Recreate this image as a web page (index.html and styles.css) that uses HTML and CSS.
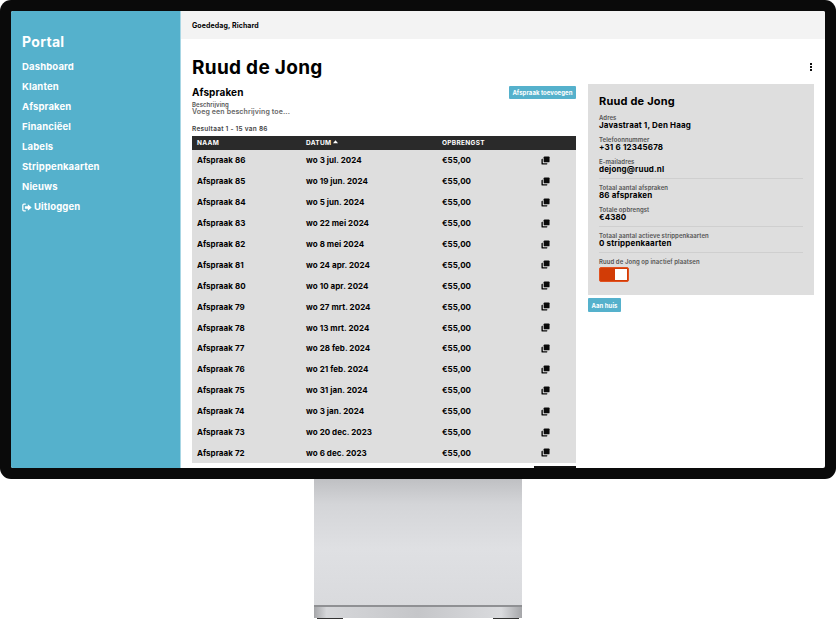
FILE: index.html
```html
<!DOCTYPE html>
<html lang="nl">
<head>
<meta charset="utf-8">
<title>Portal</title>
<link rel="stylesheet" href="styles.css">
</head>
<body>
<div class="monitor">
  <div class="screen">
    <aside class="sidebar">
      <div class="brand">Portal</div>
      <nav class="nav">
        <a>Dashboard</a><a>Klanten</a><a>Afspraken</a><a>Financiëel</a><a>Labels</a><a>Strippenkaarten</a><a>Nieuws</a>
        <a class="logout"><svg class="logout-icon" viewBox="0 0 12 10"><path d="M4.500 1H2.200C1.500 1 1 1.500 1 2.200v5.600C1 8.500 1.500 9 2.200 9h2.300" fill="none" stroke="#fff" stroke-width="1.500"/><path d="M3.500 3.600h3.500V1.200L11.600 5 7 8.800V6.400H3.500z" fill="#fff"/></svg>Uitloggen</a>
      </nav>
    </aside>
    <main class="main">
      <header class="topbar">Goededag, Richard</header>
      <div class="content">
        <div class="title-row">
          <h1>Ruud de Jong</h1>
          <span class="kebab"><i></i><i></i><i></i></span>
        </div>
        <div class="columns">
          <section class="left">
            <div class="section-head">
              <h2>Afspraken</h2>
              <button class="btn">Afspraak toevoegen</button>
            </div>
            <div class="small-label">Beschrijving</div>
            <div class="placeholder">Voeg een beschrijving toe...</div>
            <div class="result">Resultaat 1 - 15 van 86</div>
            <div class="table">
              <div class="row head"><span>NAAM</span><span>DATUM <svg class="sort" viewBox="0 0 6 4"><path d="M3 0l3 3.500H0z" fill="#fff"/></svg></span><span>OPBRENGST</span><span></span></div>
              <div class="row"><span>Afspraak 86</span><span>wo 3 jul. 2024</span><span>€55,00</span><span class="act"><svg class="copy" viewBox="0 0 10 10"><rect x="3" y="0.500" width="6.500" height="6.500" rx="1"/><path d="M2 3v4.500c0 .300.200.500.500.500H7v.500c0 .600-.400 1-1 1H1.500c-.600 0-1-.400-1-1V4c0-.600.400-1 1-1z"/></svg></span></div>
              <div class="row"><span>Afspraak 85</span><span>wo 19 jun. 2024</span><span>€55,00</span><span class="act"><svg class="copy" viewBox="0 0 10 10"><rect x="3" y="0.500" width="6.500" height="6.500" rx="1"/><path d="M2 3v4.500c0 .300.200.500.500.500H7v.500c0 .600-.400 1-1 1H1.500c-.600 0-1-.400-1-1V4c0-.600.400-1 1-1z"/></svg></span></div>
              <div class="row"><span>Afspraak 84</span><span>wo 5 jun. 2024</span><span>€55,00</span><span class="act"><svg class="copy" viewBox="0 0 10 10"><rect x="3" y="0.500" width="6.500" height="6.500" rx="1"/><path d="M2 3v4.500c0 .300.200.500.500.500H7v.500c0 .600-.400 1-1 1H1.500c-.600 0-1-.400-1-1V4c0-.600.400-1 1-1z"/></svg></span></div>
              <div class="row"><span>Afspraak 83</span><span>wo 22 mei 2024</span><span>€55,00</span><span class="act"><svg class="copy" viewBox="0 0 10 10"><rect x="3" y="0.500" width="6.500" height="6.500" rx="1"/><path d="M2 3v4.500c0 .300.200.500.500.500H7v.500c0 .600-.400 1-1 1H1.500c-.600 0-1-.400-1-1V4c0-.600.400-1 1-1z"/></svg></span></div>
              <div class="row"><span>Afspraak 82</span><span>wo 8 mei 2024</span><span>€55,00</span><span class="act"><svg class="copy" viewBox="0 0 10 10"><rect x="3" y="0.500" width="6.500" height="6.500" rx="1"/><path d="M2 3v4.500c0 .300.200.500.500.500H7v.500c0 .600-.400 1-1 1H1.500c-.600 0-1-.400-1-1V4c0-.600.400-1 1-1z"/></svg></span></div>
              <div class="row"><span>Afspraak 81</span><span>wo 24 apr. 2024</span><span>€55,00</span><span class="act"><svg class="copy" viewBox="0 0 10 10"><rect x="3" y="0.500" width="6.500" height="6.500" rx="1"/><path d="M2 3v4.500c0 .300.200.500.500.500H7v.500c0 .600-.400 1-1 1H1.500c-.600 0-1-.400-1-1V4c0-.600.400-1 1-1z"/></svg></span></div>
              <div class="row"><span>Afspraak 80</span><span>wo 10 apr. 2024</span><span>€55,00</span><span class="act"><svg class="copy" viewBox="0 0 10 10"><rect x="3" y="0.500" width="6.500" height="6.500" rx="1"/><path d="M2 3v4.500c0 .300.200.500.500.500H7v.500c0 .600-.400 1-1 1H1.500c-.600 0-1-.400-1-1V4c0-.600.400-1 1-1z"/></svg></span></div>
              <div class="row"><span>Afspraak 79</span><span>wo 27 mrt. 2024</span><span>€55,00</span><span class="act"><svg class="copy" viewBox="0 0 10 10"><rect x="3" y="0.500" width="6.500" height="6.500" rx="1"/><path d="M2 3v4.500c0 .300.200.500.500.500H7v.500c0 .600-.400 1-1 1H1.500c-.600 0-1-.400-1-1V4c0-.600.400-1 1-1z"/></svg></span></div>
              <div class="row"><span>Afspraak 78</span><span>wo 13 mrt. 2024</span><span>€55,00</span><span class="act"><svg class="copy" viewBox="0 0 10 10"><rect x="3" y="0.500" width="6.500" height="6.500" rx="1"/><path d="M2 3v4.500c0 .300.200.500.500.500H7v.500c0 .600-.400 1-1 1H1.500c-.600 0-1-.400-1-1V4c0-.600.400-1 1-1z"/></svg></span></div>
              <div class="row"><span>Afspraak 77</span><span>wo 28 feb. 2024</span><span>€55,00</span><span class="act"><svg class="copy" viewBox="0 0 10 10"><rect x="3" y="0.500" width="6.500" height="6.500" rx="1"/><path d="M2 3v4.500c0 .300.200.500.500.500H7v.500c0 .600-.400 1-1 1H1.500c-.600 0-1-.400-1-1V4c0-.600.400-1 1-1z"/></svg></span></div>
              <div class="row"><span>Afspraak 76</span><span>wo 21 feb. 2024</span><span>€55,00</span><span class="act"><svg class="copy" viewBox="0 0 10 10"><rect x="3" y="0.500" width="6.500" height="6.500" rx="1"/><path d="M2 3v4.500c0 .300.200.500.500.500H7v.500c0 .600-.400 1-1 1H1.500c-.600 0-1-.400-1-1V4c0-.600.400-1 1-1z"/></svg></span></div>
              <div class="row"><span>Afspraak 75</span><span>wo 31 jan. 2024</span><span>€55,00</span><span class="act"><svg class="copy" viewBox="0 0 10 10"><rect x="3" y="0.500" width="6.500" height="6.500" rx="1"/><path d="M2 3v4.500c0 .300.200.500.500.500H7v.500c0 .600-.400 1-1 1H1.500c-.600 0-1-.400-1-1V4c0-.600.400-1 1-1z"/></svg></span></div>
              <div class="row"><span>Afspraak 74</span><span>wo 3 jan. 2024</span><span>€55,00</span><span class="act"><svg class="copy" viewBox="0 0 10 10"><rect x="3" y="0.500" width="6.500" height="6.500" rx="1"/><path d="M2 3v4.500c0 .300.200.500.500.500H7v.500c0 .600-.400 1-1 1H1.500c-.600 0-1-.400-1-1V4c0-.600.400-1 1-1z"/></svg></span></div>
              <div class="row"><span>Afspraak 73</span><span>wo 20 dec. 2023</span><span>€55,00</span><span class="act"><svg class="copy" viewBox="0 0 10 10"><rect x="3" y="0.500" width="6.500" height="6.500" rx="1"/><path d="M2 3v4.500c0 .300.200.500.500.500H7v.500c0 .600-.400 1-1 1H1.500c-.600 0-1-.400-1-1V4c0-.600.400-1 1-1z"/></svg></span></div>
              <div class="row"><span>Afspraak 72</span><span>wo 6 dec. 2023</span><span>€55,00</span><span class="act"><svg class="copy" viewBox="0 0 10 10"><rect x="3" y="0.500" width="6.500" height="6.500" rx="1"/><path d="M2 3v4.500c0 .300.200.500.500.500H7v.500c0 .600-.400 1-1 1H1.500c-.600 0-1-.400-1-1V4c0-.600.400-1 1-1z"/></svg></span></div>
            </div>
            <div class="pager"></div>
          </section>
          <section class="right">
            <div class="card">
              <h3>Ruud de Jong</h3>
              <div class="field"><div class="small-label">Adres</div><div class="value">Javastraat 1, Den Haag</div></div>
              <div class="field"><div class="small-label">Telefoonnummer</div><div class="value">+31 6 12345678</div></div>
              <div class="field"><div class="small-label">E-mailadres</div><div class="value">dejong@ruud.nl</div></div>
              <hr>
              <div class="field"><div class="small-label">Totaal aantal afspraken</div><div class="value">86 afspraken</div></div>
              <div class="field"><div class="small-label">Totale opbrengst</div><div class="value">€4380</div></div>
              <hr>
              <div class="field"><div class="small-label">Totaal aantal actieve strippenkaarten</div><div class="value">0 strippenkaarten</div></div>
              <hr>
              <div class="small-label">Ruud de Jong op inactief plaatsen</div>
              <div class="toggle"><i></i></div>
            </div>
            <button class="btn home">Aan huis</button>
          </section>
        </div>
      </div>
    </main>
  </div>
</div>
<div class="stand"><div class="stand-base"></div><div class="feet"><i></i><i></i></div></div>
</body>
</html>
```
FILE: styles.css
```css
* { box-sizing: border-box; }
html, body { margin: 0; padding: 0; }
body { width: 836px; height: 619px; overflow: hidden; background: #fff; font-family: Inter, "Liberation Sans", sans-serif; color: #000; }
.monitor { height: 479px; background: #0a0a0a; border-radius: 11px; padding: 11px; }
.screen { height: 457px; display: flex; overflow: hidden; background: #fff; border-radius: 2px; }
.sidebar { width: 170px; flex: none; background: #55b1cc; border-right: 1px solid #a8d6e4; padding: 23px 11px 0; color: #fff; }
.brand { font-size: 14px; line-height: 16px; font-weight: 700; letter-spacing: .3px; margin-bottom: 7px; }
.nav { display: flex; flex-direction: column; }
.nav a { height: 20px; line-height: 20px; font-size: 9.500px; font-weight: 700; letter-spacing: .15px; display: flex; align-items: center; }
.logout-icon { width: 10px; height: 9px; margin-right: 2px; }
.main { flex: 1; min-width: 0; display: flex; flex-direction: column; }
.topbar { height: 28px; flex: none; background: #f3f3f3; padding: 1px 0 0 11px; font-size: 7px; line-height: 27px; font-weight: 700; letter-spacing: .1px; }
.content { padding: 0 11px; }
.title-row { height: 45px; display: flex; justify-content: space-between; align-items: center; padding-top: 11px; }
h1 { margin: 2px 0 0; font-size: 19px; line-height: 24px; font-weight: 700; letter-spacing: .3px; }
.kebab { display: flex; flex-direction: column; gap: 1px; margin-right: 2px; }
.kebab i { width: 2px; height: 2px; background: #111; display: block; }
.columns { display: flex; gap: 12px; }
.left { width: 384px; flex: none; }
.right { width: 226px; flex: none; }
.section-head { display: flex; justify-content: space-between; align-items: flex-start; height: 17px; padding-top: 2px; }
h2 { margin: 0; font-size: 10px; line-height: 13px; font-weight: 700; letter-spacing: .1px; }
.btn { border: 0; padding: 0 3.500px; height: 13px; background: #55b1cc; color: #fff; font: 700 6px/13px Inter, "Liberation Sans", sans-serif; letter-spacing: .05px; border-radius: 1px; }
.small-label { font-size: 6px; line-height: 7px; font-weight: 600; color: #555; letter-spacing: .07px; }
.placeholder { font-size: 7px; line-height: 8px; font-weight: 600; color: #666; letter-spacing: .12px; }
.result { font-size: 6.500px; line-height: 8px; font-weight: 600; color: #444; margin-top: 9px; margin-bottom: 3px; letter-spacing: .25px; }
.table { background: #dedede; }
.row { display: grid; grid-template-columns: 109px 136px 99px 40px; align-items: center; height: 20.900px; font-size: 8px; font-weight: 700; letter-spacing: .05px; padding-left: 5px; }
.row > span { white-space: nowrap; }
.row.head { height: 14px; background: #2a2a2a; color: #fff; font-size: 6.500px; letter-spacing: .3px; }
.sort { width: 5px; height: 4px; vertical-align: 1px; }
.act { display: flex; }
.copy { width: 9px; height: 9px; fill: #0a0a0a; }
.pager { width: 42px; height: 4px; margin: 3px 0 0 auto; background: #111; }
.card { background: #dedede; padding: 11px 11px 0; height: 211px; }
h3 { margin: 0 0 6px; font-size: 11px; line-height: 13px; font-weight: 700; letter-spacing: .2px; }
.field { margin-bottom: 6px; }
.value { font-size: 8px; line-height: 9px; font-weight: 700; letter-spacing: .15px; }
.card hr { border: 0; border-top: 1px solid #cfcfcf; margin: -2px 0 5px; }
.toggle { width: 30px; height: 15px; margin-top: 2px; background: #d23c06; border: 1px solid #e2511f; border-radius: 2px; display: flex; justify-content: flex-end; padding: 1px; }
.toggle i { width: 12px; background: #fff; display: block; }
.home { display: block; margin-top: 3px; padding: 0 3.500px; height: 14px; }
.stand { width: 208px; height: 140px; margin-left: 314px; background: linear-gradient(180deg, #bfc0c3 0, #d4d5d8 18%, #dfe0e3 50%, #d9dadd 90%, #d3d4d7 100%); display: flex; flex-direction: column; justify-content: flex-end; }
.stand-base { height: 13px; border-top: 2px solid #8f9093; background: linear-gradient(90deg, #a5a6a9 0, #d6d7da 6%, #c5c6c9 50%, #dadbde 90%, #a5a6a9 100%); }
.feet { height: 1px; display: flex; justify-content: space-between; padding: 0 3px; background: #fff; }
.feet i { width: 26px; background: #333; display: block; }
```
